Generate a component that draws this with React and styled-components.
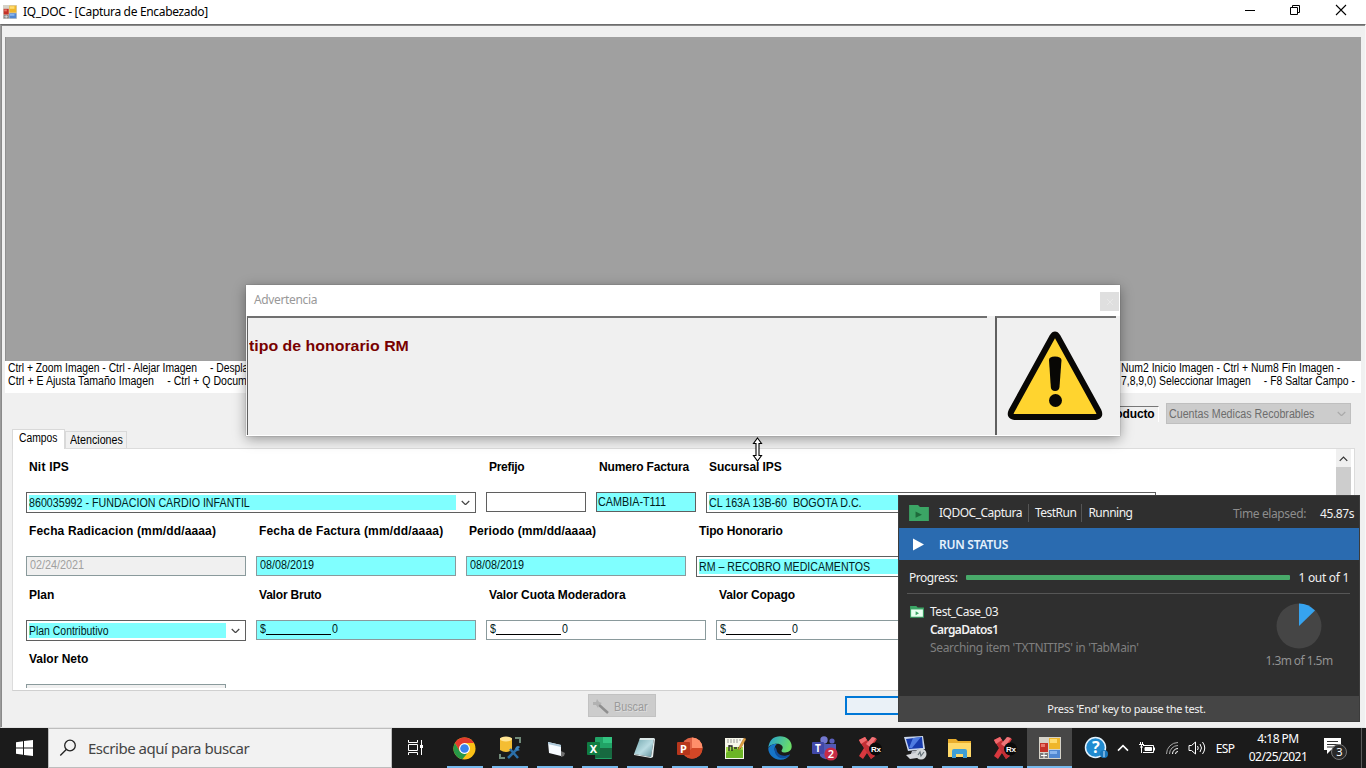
import React from 'react';
import styled, { createGlobalStyle, css } from 'styled-components';

const Global = createGlobalStyle`
  *, *::before, *::after { box-sizing: border-box; }
  body { margin: 0; width: 1366px; height: 768px; overflow: hidden; background: #f0f0f0; color: #000; }
`;
const sans = css`font-family: "Liberation Sans", Arial, sans-serif;`;
const ui = css`font-family: "Noto Sans", "Open Sans", sans-serif;`;

const Screen = styled.div`
  width: 1366px; height: 768px; display: flex; flex-direction: column; position: relative;
  overflow: hidden; ${ui} font-size: 12px; white-space: pre;
`;

/* Condensed cut of the form typeface; $k is the horizontal ratio. */
const Narrow = styled.span`
  display: inline-block; ${sans} font-size: 12px; transform: scaleX(${p => p.$k || 0.89}); transform-origin: 0 50%;
`;
const Gap = styled.i`display: inline-block; width: 15px;`;

/* ---------- main window ---------- */
const TitleBar = styled.header`
  height: 24px; flex: none; background: #fff; display: flex; align-items: center; padding-left: 3px;
`;
const WindowTitle = styled.span`
  flex: 1; margin-left: 6px; letter-spacing: -0.33px; line-height: 22px; margin-top: -1px;
`;
const WindowButtons = styled.div`
  display: flex; gap: 33px; padding-right: 19px; margin-top: -4px;
  svg { display: block; }
`;
const Frame = styled.main`
  flex: 1; display: flex; flex-direction: column; background: #f0f0f0; min-height: 0;
  border-top: 1px solid #6d6d6d; border-left: 1px solid #9b9b9b; border-bottom: 1px solid #e3e3e3;
  border-right: 1px solid #f8f8f8; box-shadow: inset 1px 1px 0 #8a8a8a; padding: 12px 4px 0 4px;
`;
const ImageViewer = styled.div`height: 324px; flex: none; background: #a0a0a0; border-left: 1px solid #8f8f8f;`;
const Hints = styled.div`
  height: 32px; flex: none; background: #fff; display: flex; justify-content: space-between;
  padding: 1px 5px 0 3px; ${sans} font-size: 12px; line-height: 13px;
`;
const HintBlock = styled.div`width: ${p => p.$w}px;`;
const HintLine = styled.div`height: 13px; display: flex;`;

const ProductBar = styled.div`
  height: 37px; flex: none; display: flex; justify-content: flex-end; align-items: flex-start;
  padding: 10px 10px 0 0; margin-bottom: -1px;
`;
const ProductLabel = styled.div`
  margin: 3px 7px 0 0; border-top: 1px solid #777; border-right: 1px solid #fff; width: 64px; height: 16px; padding-left: 8px;
  ${sans} font-weight: 700; font-size: 12px; line-height: 15px; letter-spacing: -0.15px;
`;
const DisabledSelect = styled.div`
  width: 185px; height: 21px; background: #ccc; border: 1px solid #bfbfbf; color: #6d6d6d;
  display: flex; align-items: center; justify-content: space-between; padding: 0 4px 0 2px;
`;

const Tabs = styled.div`height: 19px; flex: none; display: flex; align-items: flex-end; padding-left: 7px;`;
const Tab = styled.div`
  height: ${p => (p.$active ? 20 : 17)}px; width: ${p => (p.$active ? 53 : 62)}px;
  margin-bottom: ${p => (p.$active ? -1 : 0)}px; position: relative; z-index: 1;
  background: ${p => (p.$active ? '#fff' : '#f0f0f0')}; border: 1px solid #d9d9d9; border-bottom: 0;
  line-height: 16px; padding: ${p => (p.$active ? '0 0 0 6px' : '0 0 0 4px')};
`;
const TabPanel = styled.section`
  height: 243px; flex: none; margin: 0 6px 0 7px; background: #fff; border: 1px solid #dcdcdc;
  border-bottom-color: #d0d0d0; display: flex; justify-content: space-between; padding-right: 3px;
`;
const Form = styled.form`padding-left: 13px; height: 239px; overflow: hidden;`;
const FormRow = styled.div`display: flex; gap: 10px; height: 64px;`;
const Field = styled.div`width: ${p => p.$w}px; flex: none;`;
const FieldLabel = styled.label`
  display: block; height: 43px; padding: 10px 0 0 3px; ${sans} font-weight: 700; line-height: 16px; font-size: 12px;
  letter-spacing: ${p => p.$ls}px;
`;
const Box = styled.div`
  height: ${p => (p.$combo ? 21 : 20)}px; display: flex; justify-content: space-between;
  border: 1px solid ${p => (p.$soft ? '#8a9a9c' : '#5f5f5f')};
  background: ${p => (p.$disabled ? '#f0f0f0' : p.$filled ? '#80ffff' : '#fff')};
  color: ${p => (p.$disabled ? '#a0a0a0' : '#002020')};
  line-height: 17px; padding: ${p => (p.$combo ? '2px 0 2px 2px' : '0 3px')};
  ${p => p.$inset && css`padding: 1px 1px 0 1px; background: #80ffff;`}
`;
const ComboText = styled.span`flex: 1; background: #80ffff; line-height: 15px; height: 15px;`;
const ComboArrow = styled.span`width: 19px; display: flex; align-items: center; justify-content: center;`;
const Mask = styled.span`display: flex; ${sans}`;
const MaskLine = styled.i`width: 65px; height: 1px; background: #000; margin: 13px 1px 0 -1px;`;

const ScrollBar = styled.div`
  width: 15px; background: #f0f0f0; display: flex; flex-direction: column; align-items: center;
  svg { margin: 7px 0 5px; display: block; flex: none; }
`;
const ScrollThumb = styled.div`width: 15px; height: 90px; background: #cdcdcd;`;

const ActionBar = styled.div`flex: 1; display: flex; padding: 3px 0 0 583px; ${sans}`;
const SearchButton = styled.div`
  width: 68px; height: 23px; background: #ccc; border: 1px solid #c2c2c2; color: #9a9a9a; display: flex;
  align-items: center; padding: 2px 0 0 3px; gap: 4px; text-shadow: 1px 1px 0 #ddd;
`;
const FocusedButton = styled.div`margin: 2px 0 0 189px; width: 120px; height: 19px; border: 2px solid #0078d7; background: #eaf1f7;`;

/* ---------- warning dialog ---------- */
const Dialog = styled.div`
  position: absolute; left: 246px; top: 285px; width: 874px; height: 151px; background: #f0f0f0; z-index: 3;
  display: flex; flex-direction: column; box-shadow: 0 3px 12px rgba(0,0,0,.38), 0 0 1px rgba(0,0,0,.35);
`;
const DialogTitle = styled.div`
  height: 31px; flex: none; background: #fff; color: #999; display: flex; justify-content: space-between;
  padding-left: 8px; line-height: 30px; letter-spacing: -0.36px;
`;
const DialogClose = styled.div`margin: 7px 1px 0 0; width: 19px; height: 19px; background: #dfdfdf; color: #e8e8e8; display: grid; place-items: center;`;
const DialogBody = styled.div`flex: 1; display: flex; gap: 8px; padding: 0 4px 0 1px; border-bottom: 1px solid #fff;`;
const Pane = styled.div`
  width: ${p => p.$w}px; border-top: 2px solid #707070; border-left: ${p => p.$bl || 1}px solid #606060; display: flex;
`;
const Message = styled.div`
  ${sans} font-weight: 700; font-size: 15px; line-height: 18px; color: #780000; padding: 19px 0 0 1px;
`;
const Wide = styled.span`display: inline-block; transform: scaleX(1.06); transform-origin: 0 50%;`;
const WarningWrap = styled.div`padding: 13px 0 0 10px;`;
const SizeCursor = styled.svg`position: absolute; left: 751px; top: 437px; z-index: 4;`;

/* ---------- test runner overlay ---------- */
const Runner = styled.aside`
  position: absolute; left: 898px; top: 495px; width: 462px; height: 227px; background: #2f2f2f; color: #f2f2f2;
  border: 1px solid #3c3c3c; z-index: 5; display: flex; flex-direction: column; font-size: 12px;
`;
const RunnerHeader = styled.div`height: 32px; flex: none; display: flex; align-items: center; padding: 2px 5px 0 10px;`;
const CrumbList = styled.div`display: flex; margin-left: 10px;`;
const Crumb = styled.span`
  letter-spacing: -0.5px; padding: 0 ${p => (p.$last ? 0 : 5)}px 0 6px; line-height: 18px;
  border-right: ${p => (p.$last ? 0 : 1)}px solid #555; &:first-of-type { padding-left: 0; padding-right: 6px; }
`;
const Elapsed = styled.span`margin-left: auto; color: #8d8d8d; letter-spacing: -0.38px; margin-right: 14px;`;
const ElapsedValue = styled.span`letter-spacing: -0.4px;`;
const StatusBar = styled.div`
  height: 32px; flex: none; background: #2a6bb0; display: flex; align-items: center; gap: 15px; padding-left: 13px;
  font-weight: 600; letter-spacing: -0.25px; color: #e6f1fb;
`;
const ProgressRow = styled.div`
  height: 34px; flex: none; margin: 0 9px 0 8px; padding: 2px 1px 0 2px; display: flex; align-items: center; justify-content: space-between;
  border-bottom: 1px solid #565656; letter-spacing: -0.48px;
`;
const Track = styled.div`width: 324px; height: 5px; background: #48aa6a; border-radius: 1px;`;
const Count = styled.span`letter-spacing: -0.3px;`;
const TestRow = styled.div`flex: 1; display: flex; padding: 9px 25px 0 11px;`;
const CaseIcon = styled.span`width: 14px; padding-top: 2px;`;
const TestInfo = styled.div`flex: 1; padding-left: 6px; line-height: 18px; letter-spacing: -0.48px;`;
const Step = styled.div`font-weight: 600; letter-spacing: -0.62px;`;
const Detail = styled.div`color: #7f7f7f; letter-spacing: -0.33px;`;
const PieBox = styled.div`
  width: 70px; display: flex; flex-direction: column; align-items: center; color: #929292; letter-spacing: -0.57px;
  line-height: 18px; svg { margin: 0 0 3px 0; }
`;
const RunnerFooter = styled.div`
  height: 25px; flex: none; background: #454545; text-align: center; font-size: 11px; line-height: 25px; letter-spacing: -0.29px; padding-right: 5px;
`;

/* ---------- taskbar ---------- */
const Taskbar = styled.footer`height: 40px; flex: none; background: #1b1b1b; display: flex; color: #fff;`;
const Start = styled.div`width: 48px; flex: none; display: grid; place-items: center;`;
const SearchBox = styled.div`
  width: 344px; flex: none; background: #f2f2f2; border: 1px solid #bdbdbd; color: #444; display: flex; align-items: center;
  gap: 11px; padding-left: 10px; font-size: 15px; letter-spacing: -0.47px;
`;
const TaskView = styled.div`width: 50px; flex: none; display: grid; place-items: center; padding-right: 3px;`;
const Apps = styled.div`display: flex; flex: none;`;
const AppSlot = styled.div`
  width: 45px; height: 40px; position: relative; display: grid; place-items: center;
  background: ${p => (p.$active ? '#474747' : 'transparent')};
  &::after { content: ''; position: absolute; bottom: 0; height: 2px; background: #76b9ed; left: ${p => (p.$active ? 0 : 5)}px; right: ${p => (p.$active ? 0 : 4)}px; }
`;
const Tray = styled.div`flex: 1; display: flex; align-items: center; padding-left: 12px; svg { flex: none; }`;
const TrayItem = styled.span`width: ${p => p.$w}px; flex: none; display: grid; place-items: center; letter-spacing: -0.7px;`;
const Clock = styled.div`width: 68px; flex: none; text-align: center; line-height: 18px; letter-spacing: -0.53px;`;
const PeekEdge = styled.i`width: 1px; height: 40px; background: #5a5a5a; margin-left: auto; margin-right: 4px;`;

/* ---------- drawings ---------- */
const Chevron = ({ up, c = '#555', s = 9 }) => (
  <svg width={s} height={s * 0.66} viewBox="0 0 9 6" fill="none" stroke={c} strokeWidth="1.2"><path d={up ? 'M.7 5 4.5 1.2 8.3 5' : 'M.7 1 4.5 4.8 8.3 1'} /></svg>
);
const FormsIcon = ({ s = 14 }) => (
  <svg width={s} height={s} viewBox="0 0 22 22">
    <rect x="0" y="0" width="22" height="22" fill="#d5d2c8" />
    <rect x="1" y="6" width="8" height="9" fill="#c53227" /><rect x="2" y="7" width="4" height="3" fill="#e8776a" />
    <rect x="10" y="1" width="11" height="11" fill="#efb62b" /><rect x="11" y="2" width="7" height="4" fill="#ffdc70" />
    <rect x="10" y="13" width="11" height="8" fill="#5187d1" /><rect x="11" y="14" width="7" height="3" fill="#88b4ed" />
    <path d="M1 16h8v5H1z" fill="#7b7b7b" /><path d="M5 16v5M2 18.5h6" stroke="#fff" />
  </svg>
);
const Warning = () => (
  <svg width="96" height="90" viewBox="0 0 96 90">
    <path d="M45.500 5.500q2.500-4 5 0L91.500 80q2.500 5.500-3 6H7.500q-5.500-.5-3-6Z" fill="#ffd42f" stroke="#080705" strokeWidth="6" strokeLinejoin="round" />
    <path d="M42 29q0-3.500 6-3.500t6.500 3.500l-2 27q-.5 4-4.400 4t-4.300-4Z" fill="#080705" /><circle cx="48.500" cy="69.500" r="6.500" fill="#080705" />
  </svg>
);
const Folder = ({ w, light }) => (
  <svg width={w} height={w * 0.84} viewBox="0 0 20 17">
    <path d="M0 0h9l2 2h9v15H0z" fill="#3ba565" />
    {light && <path d="M1.500 5h17v10.500h-17z" fill="#e8fff0" />}
    <path d={light ? 'M8 7.500v6l5-3z' : 'M6.500 6.500v6.500L13 9.750z'} fill={light ? '#3ba565' : '#1e6a3b'} />
  </svg>
);
const Rx = () => (
  <svg width="25" height="24" viewBox="0 0 25 24">
    <path d="M2 4l6-3 4 6 4-6 4 2-5 8 3 9-4 3-4-6-4 6-4-3 5-8z" fill="#d8383e" />
    <path d="m8 1 9 18-3 4L2 4z" fill="#c22f35" /><path d="M9 8 15 1l4 1-6 9z" fill="#f0757a" /><path d="m2 4 6-3 2 3-6 4z" fill="#ef6a6e" />
    <circle cx="18.500" cy="13" r="6.500" fill="#0a0a0a" /><text x="14" y="16" fontSize="8" fontWeight="700" fontFamily="Liberation Sans, sans-serif" letterSpacing="-.3" fill="#fff">Rx</text>
  </svg>
);
const Office = ({ letter, base, mid, light, round }) => (
  <svg width="26" height="22" viewBox="0 0 26 22">
    {round ? <><circle cx="15" cy="11" r="10.500" fill={base} /><path d="M15 .5A10.500 10.500 0 0 1 25.500 11H15z" fill={light} /><path d="M15 11h10.500A10.500 10.500 0 0 1 8 19z" fill={mid} /></>
      : <><rect x="8" y="0" width="17" height="22" rx="1" fill={base} /><path d="M16 0h9v6h-9z" fill={light} /><path d="M8 11h17v10H8z" fill={mid} /></>}
    <rect x="0" y="5" width="13" height="13" rx="1" fill={round ? '#b7361c' : '#107c41'} />
    <text x="6.500" y="15.500" textAnchor="middle" fontSize="11" fontWeight="700" fontFamily="Noto Sans, sans-serif" fill="#fff">{letter}</text>
  </svg>
);
const Chrome = () => (
  <svg width="23" height="23" viewBox="0 0 24 24">
    <circle cx="12" cy="12" r="11.500" fill="#fbc116" />
    <path d="M2 6.200A11.500 11.500 0 0 1 22 6.300H12L7 15z" fill="#e33b2e" />
    <path d="M2 6.200 7 14.900l5 2.600 3-.5-5.200 6.300A11.500 11.500 0 0 1 2 6.200z" fill="#279847" />
    <circle cx="12" cy="12" r="5.700" fill="#fff" /><circle cx="12" cy="12" r="4.500" fill="#3982ed" />
  </svg>
);
const DbTools = () => (
  <svg width="24" height="24" viewBox="0 0 24 24">
    <path d="M2 2v12q6 4 12 0V2z" fill="#f4bd32" /><ellipse cx="8" cy="3" rx="6" ry="2.500" fill="#ffe493" />
    <path d="M17 2h5v5M2 18v4h5" stroke="#718b7a" strokeWidth="2" fill="none" />
    <path d="m10 22 10-10M12 13l8 9" stroke="#2b6fa8" strokeWidth="2.500" /><path d="M18 11q2-2 4 0l-2 2 2 1q-3 2-5-1z" fill="#3e86bf" />
  </svg>
);
const Box3d = () => (
  <svg width="22" height="20" viewBox="0 0 22 20"><path d="m4 4 13 3v11L5 15z" fill="#f7fbff" /><path d="m4 4 13 3v2L4 6z" fill="#abc7d8" /><path d="m17 13 4 2-1 3-3 1z" fill="#707070" /></svg>
);
const Notepad = () => (
  <svg width="23" height="22" viewBox="0 0 23 22"><defs><linearGradient id="np" x1="0" y1="0" x2="1" y2="1"><stop stopColor="#6da2aa" /><stop offset=".55" stopColor="#b9dce2" /><stop offset="1" stopColor="#5d8e98" /></linearGradient></defs>
    <path d="M7 1h14l-3 19-17-3z" fill="url(#np)" /><path d="M7 1h14l-.4 2H6.500z" fill="#dce8e8" /><path d="m21 1 1 1-2 18-2 1-17-3v-1l17 3z" fill="#e5eeee" /></svg>
);
const NotepadPP = () => (
  <svg width="22" height="24" viewBox="0 0 22 24"><path d="M1 2h19v21H1z" fill="#f7f7ea" /><path d="M2 11h17v11H2z" fill="#a5dc4a" /><path d="M2 17q8-6 17-3v8H2z" fill="#6cb526" />
    <path d="M3 4h14M3 6h12" stroke="#999" strokeDasharray="2 1" /><path d="M5 9v6M5 10h3v5M10 12h3M14 12h3" stroke="#222" strokeWidth="1.300" fill="none" /><path d="m15 11 5-9 2 1-5 9-3 2z" fill="#dfa341" stroke="#a76b2c" strokeWidth=".5" /></svg>
);
const Edge = () => (
  <svg width="24" height="24" viewBox="0 0 24 24"><defs><linearGradient id="eg" x1="0" y1="0" x2="1" y2=".3"><stop stopColor="#249fd5" /><stop offset="1" stopColor="#69dc69" /></linearGradient></defs>
    <path d="M.3 12C1 4 6 .3 12 .3c7 0 11.700 4.700 11.700 10 0 4-3 6.200-6.500 6.200-4 0-4.200-1.500-3-3.200 1.800-3-1.200-5.600-5-5.600C5 7.700 1 9.500.3 12z" fill="url(#eg)" />
    <path d="M.3 12Q3 7.700 9 7.700c-2.500 2-4 7 .5 11.300 3.500 3 8 1.500 12.500-.5-2 3.500-5.500 5.200-9.500 5.200C5 23.700 0 18 .3 12z" fill="#1675c8" />
    <path d="M7.500 11c-2.500 5 1.500 11.500 7 11.300 4 0 6-1.500 7.500-3.800-7 3-13 0-13.500-5z" fill="#104e9c" /></svg>
);
const Teams = () => (
  <svg width="27" height="25" viewBox="0 0 27 25"><circle cx="13" cy="4" r="3.700" fill="#7378d0" /><circle cx="21" cy="5" r="2.600" fill="#5b60bd" />
    <path d="M8 8h17v8q-1 6-5 5-6 5-11-1z" fill="#5259b5" /><rect x="1" y="6" width="12" height="12" rx="1" fill="#4148a7" />
    <text x="7" y="16" textAnchor="middle" fontSize="10" fontWeight="700" fontFamily="Noto Sans, sans-serif" fill="#fff">T</text>
    <circle cx="20" cy="18" r="6.600" fill="#c72b46" /><text x="20" y="22" textAnchor="middle" fontSize="11" fontWeight="600" fontFamily="Noto Sans, sans-serif" fill="#fff">2</text></svg>
);
const Remote = () => (
  <svg width="24" height="24" viewBox="0 0 24 24"><path d="m1 1 19-1 2 13-17 2z" fill="#cad7ed" /><path d="m3 3 16-2 1 11-14 1z" fill="#173bad" /><path d="m10 2 8-1-9 11H6z" fill="#4f7ce1" />
    <path d="m9 15 8-1 2 4-12 2z" fill="#b8bcc4" /><path d="m3 19 14-3 4 5-14 2z" fill="#d7d9dd" /><circle cx="18" cy="18" r="5.500" fill="#d2d6d8" /><path d="m15 19 2-3 1 4 3-4" stroke="#657178" fill="none" strokeWidth="1.200" /></svg>
);
const Explorer = () => (
  <svg width="23" height="21" viewBox="0 0 23 21"><path d="M0 1h8l2 2h13v16H0z" fill="#e9ad2c" /><path d="M0 5h23v14H0z" fill="#ffd969" /><path d="M4 20v-7q0-2 2-2h11q2 0 2 2v7h-4v-4H8v4z" fill="#3f9fd5" /></svg>
);
const apps = [Chrome, DbTools, Box3d,
  () => <Office letter="X" base="#21a366" mid="#176940" light="#33c481" />, Notepad,
  () => <Office letter="P" base="#df6245" mid="#d24726" light="#ff8f6b" round />, NotepadPP, Edge, Teams, Rx, Remote, Explorer, Rx];

/* ---------- form parts ---------- */
const Input = ({ w, label, ls = 0, value, k, mask, combo, ...box }) => (
  <Field $w={w}>
    <FieldLabel $ls={ls}>{label}</FieldLabel>
    <Box $combo={combo} {...box}>
      {combo ? <><ComboText><Narrow $k={k}>{value}</Narrow></ComboText><ComboArrow><Chevron c="#444" /></ComboArrow></>
        : mask ? <Mask><Narrow>$</Narrow><MaskLine /><Narrow>0</Narrow></Mask> : <Narrow $k={k || 0.9}>{value}</Narrow>}
    </Box>
  </Field>
);

export default function App() {
  return (
    <Screen>
      <Global />
      <TitleBar>
        <FormsIcon />
        <WindowTitle>IQ_DOC - [Captura de Encabezado]</WindowTitle>
        <WindowButtons>
          <svg width="10" height="12"><path d="M0 6.500h10" stroke="#000" /></svg>
          <svg width="14" height="12" fill="none" stroke="#000"><path d="M2.500 3.500h7v7h-7zM4.500 3.500v-2h7v7h-2" /></svg>
          <svg width="12" height="12" stroke="#000" strokeWidth="1.100"><path d="m1 1 10 10M11 1 1 11" /></svg>
        </WindowButtons>
      </TitleBar>

      <Frame>
        <ImageViewer />
        <Hints>
          <HintBlock $w={240}>
            <HintLine><Narrow $k={0.86}>Ctrl + Zoom Imagen - Ctrl - Alejar Imagen<Gap />- Despla</Narrow></HintLine>
            <HintLine><Narrow $k={0.882}>Ctrl + E Ajusta Tamaño Imagen<Gap />- Ctrl + Q Docume</Narrow></HintLine>
          </HintBlock>
          <HintBlock $w={235}>
            <HintLine><Narrow $k={0.868}>Num2 Inicio Imagen - Ctrl + Num8 Fin Imagen -</Narrow></HintLine>
            <HintLine><Narrow $k={0.865}>7,8,9,0) Seleccionar Imagen<Gap />- F8 Saltar Campo -</Narrow></HintLine>
          </HintBlock>
        </Hints>
        <ProductBar>
          <ProductLabel>Producto</ProductLabel>
          <DisabledSelect><Narrow>Cuentas Medicas Recobrables</Narrow><Chevron c="#aaa" /></DisabledSelect>
        </ProductBar>
        <Tabs><Tab $active><Narrow $k={0.86}>Campos</Narrow></Tab><Tab><Narrow>Atenciones</Narrow></Tab></Tabs>
        <TabPanel>
          <Form>
            <FormRow>
              <Input w={450} label="Nit IPS" ls={0.2} combo value="860035992 - FUNDACION CARDIO INFANTIL" />
              <Input w={100} label="Prefijo" ls={-0.3} />
              <Input w={100} label="Numero Factura" ls={-0.15} value="CAMBIA-T111" $inset />
              <Input w={450} label="Sucursal IPS" ls={-0.05} combo value="CL 163A 13B-60  BOGOTA D.C." />
            </FormRow>
            <FormRow>
              <Input w={220} label="Fecha Radicacion (mm/dd/aaaa)" ls={0.15} value="02/24/2021" $disabled $soft />
              <Input w={200} label="Fecha de Factura (mm/dd/aaaa)" ls={0.17} value="08/08/2019" $filled $soft />
              <Input w={220} label="Periodo (mm/dd/aaaa)" ls={0.08} value="08/08/2019" $filled $soft />
              <Input w={450} label="Tipo Honorario" ls={-0.15} combo value="RM – RECOBRO MEDICAMENTOS" k={0.883} />
            </FormRow>
            <FormRow>
              <Input w={220} label="Plan" combo value="Plan Contributivo" k={0.87} />
              <Input w={220} label="Valor Bruto" ls={-0.2} mask $filled $soft />
              <Input w={220} label="Valor Cuota Moderadora" ls={-0.1} mask $soft />
              <Input w={220} label="Valor Copago" ls={-0.12} mask $soft />
            </FormRow>
            <FormRow>
              <Input w={200} label="Valor Neto" ls={0} $disabled $soft />
            </FormRow>
          </Form>
          <ScrollBar><Chevron up c="#333" /><ScrollThumb /></ScrollBar>
        </TabPanel>
        <ActionBar>
          <SearchButton>
            <svg width="18" height="17" viewBox="0 0 18 17"><path d="m6 6 10 9" stroke="#8f8f8f" strokeWidth="2.500" /><path d="M1 4h3l1-3 2 3 3 1-3 2-1 3-2-3H1z" fill="#b2b2b2" /></svg>
            <Narrow $k={0.9}>Buscar</Narrow>
          </SearchButton>
          <FocusedButton />
        </ActionBar>
      </Frame>

      <Taskbar>
        <Start><svg width="17" height="16" viewBox="0 0 17 16" fill="#fff"><path d="M0 2.200 7 1.200v6.300H0zM8 1l9-1v7.500H8zM0 8.500h7v6.300l-7-1zM8 8.500h9V16l-9-1z" /></svg></Start>
        <SearchBox>
          <svg width="18" height="18" fill="none" stroke="#222" strokeWidth="1.300"><circle cx="11" cy="6.500" r="5.300" /><path d="m7.300 10.500-6 6" /></svg>
          Escribe aquí para buscar
        </SearchBox>
        <TaskView><svg width="17" height="16" fill="none" stroke="#fff"><path d="M1.500 0v2.500h9V0M1.500 4.500h9v6h-9zM1.500 15v-2.500h9V15M14.500 0v15" /><path d="M13 5h3v3h-3z" fill="#fff" stroke="none" /></svg></TaskView>
        <Apps>
          {apps.map((Icon, i) => <AppSlot key={i}><Icon /></AppSlot>)}
          <AppSlot $active><FormsIcon s={22} /></AppSlot>
        </Apps>
        <Tray>
          <TrayItem $w={24}>
            <svg width="24" height="24" viewBox="0 0 24 24"><circle cx="11.500" cy="11.500" r="10" fill="#218bd0" stroke="#e3f3ff" strokeWidth="1.500" /><text x="11.500" y="17" textAnchor="middle" fontSize="16" fontWeight="700" fontFamily="Noto Sans, sans-serif" fill="#fff">?</text><circle cx="20" cy="18" r="4" fill="#1977bd" /><path d="M20 15v6" stroke="#cfeaff" /></svg>
          </TrayItem>
          <TrayItem $w={30}><Chevron up c="#fff" s={12} /></TrayItem>
          <TrayItem $w={18}>
            <svg width="18" height="14" fill="none" stroke="#fff"><path d="M5 4.500h10.500v7H5" /><path d="M7 6.500h6.500v3H7z" fill="#fff" /><path d="M16.500 6.500v3M1 3.500h5M2.500 1v2M4.500 1v2M3.500 4v8M2 6h3" /></svg>
          </TrayItem>
          <TrayItem $w={32}>
            <svg width="14" height="14" fill="none" stroke="#aaa"><path d="M1.500 13A11.500 11.500 0 0 1 13 1.500M4.500 13A8.500 8.500 0 0 1 13 4.500" /><path d="M7.500 13A5.500 5.500 0 0 1 13 7.500M10.500 13A2.500 2.500 0 0 1 13 10.500" stroke="#fff" /></svg>
          </TrayItem>
          <TrayItem $w={18}>
            <svg width="18" height="14" fill="none" stroke="#fff"><path d="M1 4.500h2.500l4-3.500v12l-4-3.500H1zM9.500 5q1.500 2 0 4M12 3q3 4 0 8M14.500 1q4.500 6 0 12" /></svg>
          </TrayItem>
          <TrayItem $w={38}>ESP</TrayItem>
          <Clock>4:18 PM<br />02/25/2021</Clock>
          <TrayItem $w={46}>
            <svg width="26" height="26" viewBox="0 0 26 26"><path d="M2 3h17v12H9l-4 4v-4H2z" fill="#fff" /><path d="M5 6.500h11M5 9.500h11M5 12h7" stroke="#333" /><circle cx="17" cy="17" r="7.500" fill="#292929" stroke="#777" /><text x="17" y="21" textAnchor="middle" fontSize="11" fontFamily="Noto Sans, sans-serif" fill="#fff">3</text></svg>
          </TrayItem>
          <PeekEdge />
        </Tray>
      </Taskbar>

      <Dialog>
        <DialogTitle>Advertencia<DialogClose><svg width="8" height="8" stroke="currentColor"><path d="m1 1 6 6M7 1 1 7" /></svg></DialogClose></DialogTitle>
        <DialogBody>
          <Pane $w={740}><Message><Wide>tipo de honorario RM</Wide></Message></Pane>
          <Pane $w={121} $bl={2}><WarningWrap><Warning /></WarningWrap></Pane>
        </DialogBody>
      </Dialog>

      <SizeCursor width="13" height="25" viewBox="0 0 13 25" fill="#fff" stroke="#000" strokeWidth="1.100"><path d="M6.500 1 10.500 6.500H8v12h2.500L6.500 24l-4-5.500H5v-12H2.500z" /></SizeCursor>

      <Runner>
        <RunnerHeader>
          <Folder w={20} />
          <CrumbList><Crumb>IQDOC_Captura</Crumb><Crumb>TestRun</Crumb><Crumb $last>Running</Crumb></CrumbList>
          <Elapsed>Time elapsed:</Elapsed><ElapsedValue>45.87s</ElapsedValue>
        </RunnerHeader>
        <StatusBar><svg width="12" height="13"><path d="M1 0.500v12l11-6z" fill="#fff" /></svg>RUN STATUS</StatusBar>
        <ProgressRow>Progress:<Track /><Count>1 out of 1</Count></ProgressRow>
        <TestRow>
          <CaseIcon><Folder w={14} light /></CaseIcon>
          <TestInfo>Test_Case_03<Step>CargaDatos1</Step><Detail>Searching item 'TXTNITIPS' in 'TabMain'</Detail></TestInfo>
          <PieBox>
            <svg width="46" height="46"><circle cx="23" cy="23" r="22.500" fill="#454545" /><path d="M23 23V.5A22.500 22.500 0 0 1 39 7.500z" fill="#36a3ef" /></svg>
            1.3m of 1.5m
          </PieBox>
        </TestRow>
        <RunnerFooter>Press 'End' key to pause the test.</RunnerFooter>
      </Runner>
    </Screen>
  );
}
